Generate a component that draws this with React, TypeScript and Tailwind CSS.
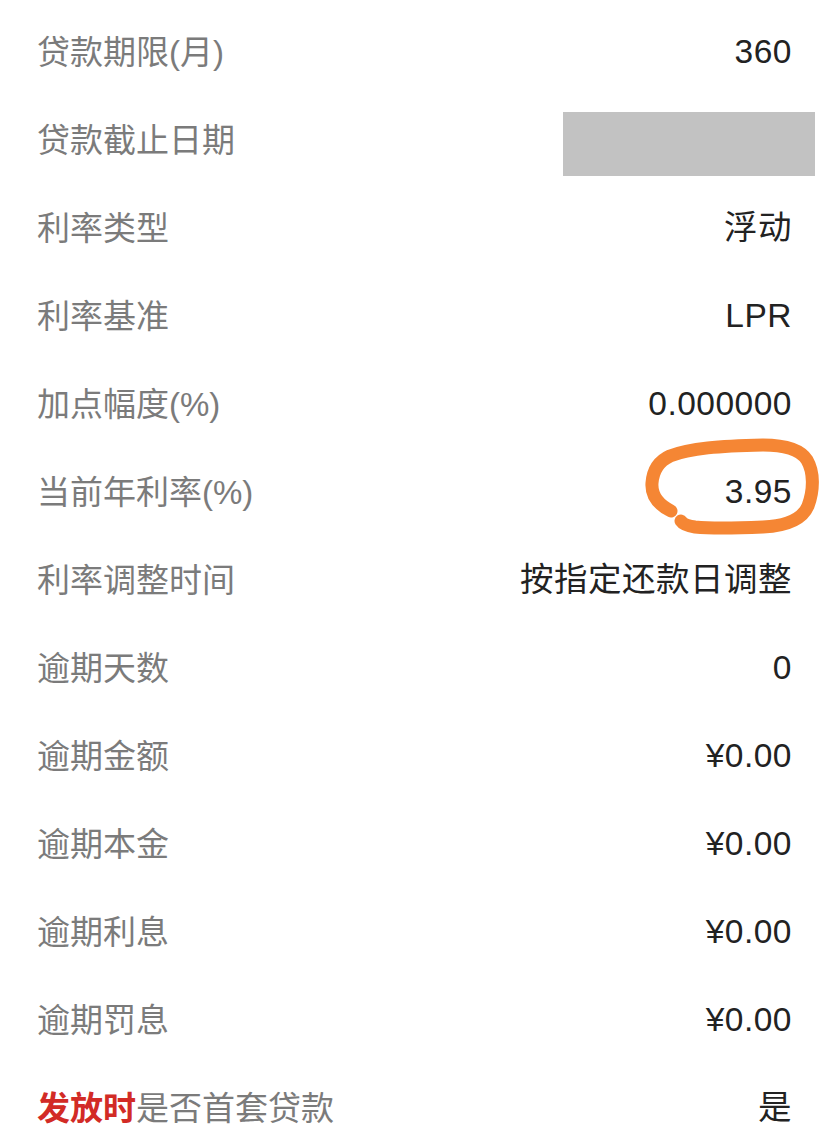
import React from "react"

const rows: { label: React.ReactNode; value: React.ReactNode; key: string }[] = [
  { key: "term", label: "贷款期限(月)", value: "360" },
  { key: "end", label: "贷款截止日期", value: <div className="h-[64px] w-[252px] bg-[#c2c2c2] -mr-[23px] mt-[8px]" /> },
  { key: "type", label: "利率类型", value: "浮动" },
  { key: "base", label: "利率基准", value: "LPR" },
  { key: "spread", label: "加点幅度(%)", value: "0.000000" },
  { key: "rate", label: "当前年利率(%)", value: "3.95" },
  { key: "adjust", label: "利率调整时间", value: "按指定还款日调整" },
  { key: "days", label: "逾期天数", value: "0" },
  { key: "amount", label: "逾期金额", value: "¥0.00" },
  { key: "principal", label: "逾期本金", value: "¥0.00" },
  { key: "interest", label: "逾期利息", value: "¥0.00" },
  { key: "penalty", label: "逾期罚息", value: "¥0.00" },
  {
    key: "first",
    label: (
      <>
        <span className="font-bold text-[#d22b26]">发放时</span>是否首套贷款
      </>
    ),
    value: "是",
  },
]

function Scribble() {
  // orange hand-drawn circle around the current rate
  return (
    <svg className="absolute left-[640px] top-[436px] pointer-events-none" width="180" height="102" viewBox="640 436 180 102">
      <path
        d="M671 511 C 659 505, 651 496, 652 483 C 653 470, 659 461, 670 456 C 690 448, 720 446, 763 445 C 785 445, 800 449, 807 460 C 814 472, 814 490, 808 506 C 802 520, 785 526, 763 527 C 740 528, 715 529, 695 527 C 688 526, 683 524, 681 521"
        fill="none"
        stroke="#f58634"
        strokeWidth="13"
        strokeLinecap="round"
        strokeLinejoin="round"
      />
    </svg>
  )
}

export default function App() {
  return (
    <div
      className="relative w-[820px] h-[1124px] overflow-hidden bg-white pt-[8px]"
      style={{ fontFamily: '"Liberation Sans", "Noto Sans CJK SC", sans-serif' }}
    >
      {rows.map((r) => (
        <div key={r.key} className="flex h-[88px] items-center justify-between pl-[37px] pr-[28px] leading-none">
          <div className="text-[33px] text-[#7b7b7b] whitespace-nowrap">{r.label}</div>
          <div className="text-[33.5px] tracking-[0.5px] text-[#222222] whitespace-nowrap">{r.value}</div>
        </div>
      ))}
      <Scribble />
    </div>
  )
}
